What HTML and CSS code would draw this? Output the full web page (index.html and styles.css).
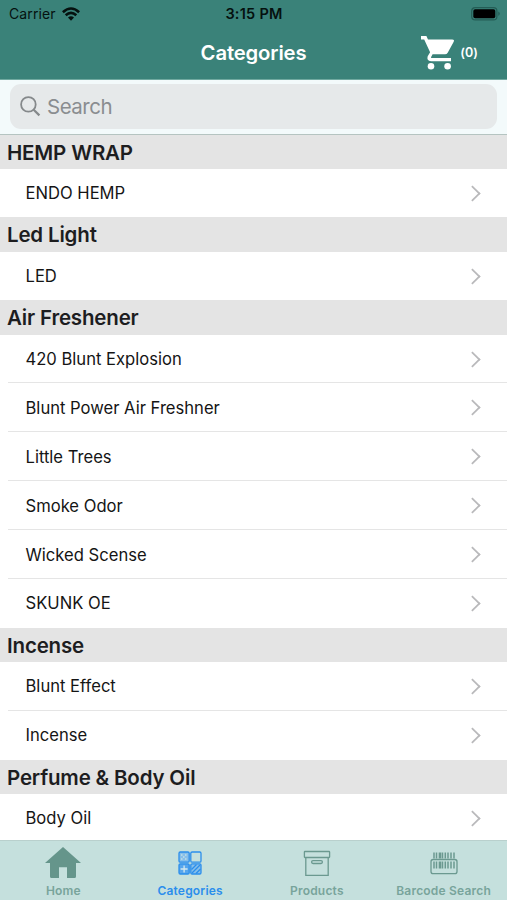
FILE: index.html
```html
<!DOCTYPE html>
<html lang="en">
<head>
<meta charset="utf-8">
<title>Categories</title>
<link rel="stylesheet" href="styles.css">
</head>
<body>
<div class="app">
  <header class="top">
    <div class="status">
      <div class="carrier"><span>Carrier</span>
        <svg width="18" height="14" viewBox="0 0 18 14" fill="none" stroke="#05110f" stroke-width="2.6"><path d="M.9 5.2Q9-2.2 17.1 5.2"/><path d="M3.7 8.3Q9 3.4 14.3 8.3"/><path d="M6 10.6Q9 7.8 12 10.6L9 13.7Z" fill="#05110f" stroke="none"/></svg>
      </div>
      <div class="time">3:15 PM</div>
      <svg class="battery" width="30" height="14" viewBox="0 0 30 14"><rect x=".7" y=".7" width="25.2" height="12.2" rx="3.5" fill="none" stroke="#245d56" stroke-width="1.2"/><rect x="2.3" y="2.3" width="22" height="9" rx="1.8" fill="#000"/><path d="M27.3 4.6q3 2.2 0 4.4z" fill="#245d56"/></svg>
    </div>
    <div class="nav">
      <h1>Categories</h1>
      <div class="cart">
        <svg width="34" height="34" viewBox="0 0 34 34" fill="#fff"><path d="M0 0H5.4L7 3.5H31.2Q33.7 3.5 32.7 5.7L26.7 16.7Q25.8 18.3 24 18.3H11.6L10 21.2Q9.7 22 10.7 22H30V25.3H10Q5.3 24.7 6.7 20.3L9.1 16.3L3.2 3.4H0Z"/><circle cx="10" cy="30.2" r="3.3"/><circle cx="26.6" cy="30.2" r="3.3"/></svg>
        <span>(0)</span>
      </div>
    </div>
  </header>
  <div class="search">
    <div class="field">
      <svg width="21" height="21" viewBox="0 0 21 21" fill="none" stroke="#85898b" stroke-width="1.8"><circle cx="8.4" cy="8.4" r="7.3"/><path d="M13.7 13.7L19.4 19.4" stroke-width="2.2"/></svg>
      <span>Search</span>
    </div>
  </div>
  <main class="list">
    <h2>HEMP WRAP</h2>
    <ul><li><span>ENDO HEMP</span></li></ul>
    <h2>Led Light</h2>
    <ul><li><span>LED</span></li></ul>
    <h2>Air Freshener</h2>
    <ul>
      <li><span>420 Blunt Explosion</span></li>
      <li><span>Blunt Power Air Freshner</span></li>
      <li><span>Little Trees</span></li>
      <li><span>Smoke Odor</span></li>
      <li><span>Wicked Scense</span></li>
      <li><span>SKUNK OE</span></li>
    </ul>
    <h2>Incense</h2>
    <ul><li><span>Blunt Effect</span></li><li><span>Incense</span></li></ul>
    <h2>Perfume &amp; Body Oil</h2>
    <ul><li><span>Body Oil</span></li></ul>
  </main>
  <nav class="tabs">
    <div class="tab">
      <svg width="36" height="32" viewBox="0 0 36 32" fill="#65958b"><path d="M18 0L36 16H31V29.5Q31 31 29.5 31H22V20.3H14V31H6.5Q5 31 5 29.5V16H0Z"/></svg>
      <span>Home</span>
    </div>
    <div class="tab active">
      <svg width="36" height="32" viewBox="0 0 36 32" fill="none" stroke="#2b8eec" stroke-width="1.3"><rect x="7" y="5" width="10.2" height="10.2" rx="1.3" fill="#86bfea"/><rect x="18.8" y="5" width="10.2" height="10.2" rx="1.3"/><rect x="7" y="16.8" width="10.2" height="10.2" rx="1.3" fill="#57a6ed"/><rect x="18.8" y="16.8" width="10.2" height="10.2" rx="1.3" fill="#86bfea"/><path d="M12.1 18.5V25.5M8.6 22H15.6" stroke="#d5e9ee"/><path d="M19.5 22.5L24.5 17.5M20 26L28 18M24 26.5L28.5 22"/><path d="M9 8h1.5M13 8h1.5M11 10h1.5M9 12h1.5M13 12h1.5" stroke="#c3dfe5"/></svg>
      <span>Categories</span>
    </div>
    <div class="tab">
      <svg width="36" height="32" viewBox="0 0 36 32" fill="none" stroke="#6b9990" stroke-width="1.3"><rect x="5.4" y="4.5" width="25.2" height="6" rx=".5"/><path d="M6.8 10.5V28.4H29.2V10.5"/><rect x="12.6" y="13.7" width="10.8" height="2.8" rx="1.4"/></svg>
      <span>Products</span>
    </div>
    <div class="tab">
      <svg width="36" height="32" viewBox="0 0 36 32" fill="none" stroke="#6b9990"><rect x="5" y="12.5" width="26" height="14.2" rx="2.2" stroke-width="1.3"/><path d="M8 5.5V11.5M10.5 5.5V11.5M16.5 5.5V11.5M19.3 5.5V11.5M22 5.5V11.5M25 5.5V11.5M28 5.5V11.5M8 14.5V21.5M10.5 14.5V21.5M16.5 14.5V21.5M19.3 14.5V21.5M22 14.5V21.5M25 14.5V21.5M28 14.5V21.5" stroke-width="1.5"/><path d="M14 5.5V11.5M14 14.5V21.5" stroke-width="2.6"/></svg>
      <span>Barcode Search</span>
    </div>
  </nav>
</div>
</body>
</html>
```

FILE: styles.css
```css
* { box-sizing: border-box; }
body { margin: 0; font-family: Inter, "Liberation Sans", sans-serif; background: #fff; }
h1, h2, ul { margin: 0; padding: 0; }
svg { display: block; flex: none; }
span, h1, h2, .time { white-space: nowrap; }
.app { width: 507px; height: 900px; overflow: hidden; display: flex; flex-direction: column; }
.top { height: 80px; flex: none; background: #3a8279; border-bottom: 1px solid #70a9a0; }
.status { height: 27px; display: grid; grid-template-columns: 1fr auto 1fr; align-items: center; padding: 0 6px 0 9px; color: #05110f; }
.carrier { display: flex; align-items: center; gap: 6px; font-size: 14px; letter-spacing: .1px; }
.time { font-size: 14.5px; font-weight: 600; letter-spacing: .25px; position: relative; left: -1px; }
.battery { justify-self: end; }
.nav { height: 52px; display: grid; grid-template-columns: 1fr auto 1fr; align-items: center; color: #fff; }
.nav h1 { grid-column: 2; font-size: 20.3px; font-weight: 600; letter-spacing: -.15px; padding-bottom: 2px; }
.cart { justify-self: end; display: flex; align-items: center; gap: 5px; padding: 0 29px 1px 0; font-size: 12.5px; font-weight: 600; letter-spacing: .1px; }
.search { height: 54.5px; flex: none; padding: 4px 10px 5px; background: #f3fafb; border-bottom: 1px solid #b5c4c1; }
.field { height: 44.5px; border-radius: 11px; background: #e6e9ea; display: flex; align-items: center; gap: 6px; padding-left: 10px; color: #8a8d90; font-size: 20.5px; letter-spacing: -.5px; }
.list { flex: 1; min-height: 0; overflow: hidden; }
.list h2 { height: 34.1px; background: #e4e4e4; padding-left: 7px; font-size: 20.5px; line-height: 36.5px; font-weight: 600; color: #1d1d1f; letter-spacing: -.17px; }
.list ul { list-style: none; }
.list li { position: relative; height: 48.9px; display: flex; align-items: center; justify-content: space-between; padding: 0 28px 0 25.5px; font-size: 16.6px; color: #151515; letter-spacing: 0; }
.list li::after { content: ""; width: 11px; height: 11px; border: solid #b9b9bb; border-width: 2.5px 2.5px 0 0; transform: rotate(45deg) scale(.88); }
.list li + li::before { content: ""; position: absolute; left: 8px; right: 0; top: -1px; height: 1px; background: #e5e5e5; }
.tabs { height: 60px; flex: none; display: grid; grid-template-columns: repeat(4, 1fr); background: #c5e0dd; border-top: 1px solid #b9d0cd; }
.tab { display: flex; flex-direction: column; align-items: center; padding: 6px 0 0; gap: 4px; color: #78a49b; font-size: 12px; font-weight: 600; line-height: 16px; letter-spacing: .2px; }
.tab.active { color: #2b8eec; }
```
